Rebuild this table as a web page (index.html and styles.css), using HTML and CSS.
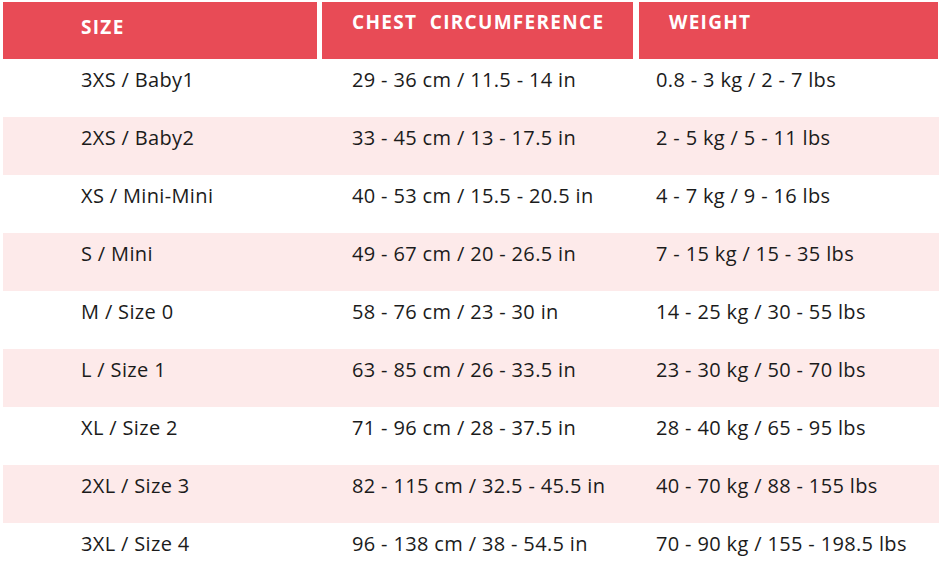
FILE: index.html
```html
<!DOCTYPE html>
<html lang="en">
<head>
<meta charset="utf-8">
<title>Size chart</title>
<link rel="stylesheet" href="styles.css">
</head>
<body>
<div class="chart">
  <div class="head">
    <div class="hcell hsize">SIZE</div>
    <div class="hcell hchest">CHEST&nbsp; CIRCUMFERENCE</div>
    <div class="hcell hweight">WEIGHT</div>
  </div>
  <div class="row"><div class="c1">3XS / Baby1</div><div class="c2">29 - 36 cm / 11.5 - 14 in</div><div class="c3">0.8 - 3 kg / 2 - 7 lbs</div></div>
  <div class="row alt"><div class="c1">2XS / Baby2</div><div class="c2">33 - 45 cm / 13 - 17.5 in</div><div class="c3">2 - 5 kg / 5 - 11 lbs</div></div>
  <div class="row"><div class="c1">XS / Mini-Mini</div><div class="c2">40 - 53 cm / 15.5 - 20.5 in</div><div class="c3">4 - 7 kg / 9 - 16 lbs</div></div>
  <div class="row alt"><div class="c1">S / Mini</div><div class="c2">49 - 67 cm / 20 - 26.5 in</div><div class="c3">7 - 15 kg / 15 - 35 lbs</div></div>
  <div class="row"><div class="c1">M / Size 0</div><div class="c2">58 - 76 cm / 23 - 30 in</div><div class="c3">14 - 25 kg / 30 - 55 lbs</div></div>
  <div class="row alt"><div class="c1">L / Size 1</div><div class="c2">63 - 85 cm / 26 - 33.5 in</div><div class="c3">23 - 30 kg / 50 - 70 lbs</div></div>
  <div class="row"><div class="c1">XL / Size 2</div><div class="c2">71 - 96 cm / 28 - 37.5 in</div><div class="c3">28 - 40 kg / 65 - 95 lbs</div></div>
  <div class="row alt"><div class="c1">2XL / Size 3</div><div class="c2">82 - 115 cm / 32.5 - 45.5 in</div><div class="c3">40 - 70 kg / 88 - 155 lbs</div></div>
  <div class="row"><div class="c1">3XL / Size 4</div><div class="c2">96 - 138 cm / 38 - 54.5 in</div><div class="c3">70 - 90 kg / 155 - 198.5 lbs</div></div>
</div>
</body>
</html>
```
FILE: styles.css
```css
html, body {
  margin: 0;
  background: #ffffff;
}
.chart {
  padding: 2px 1px 0 3px;
  font-family: "Open Sans", "Liberation Sans", sans-serif;
  color: #1b1b1b;
}
.head {
  display: grid;
  grid-template-columns: 314px 311px 300px;
  column-gap: 5px;
}
.head .hweight { margin-left: 1px; }
.hcell {
  height: 57px;
  background: #e84b56;
  color: #ffffff;
  font-weight: 700;
  font-size: 19px;
  letter-spacing: 1.3px;
  box-sizing: border-box;
}
.hsize { padding: 12px 0 0 78px; }
.hchest { padding: 7px 0 0 30px; }
.hweight { padding: 7px 0 0 30px; }
.row {
  display: grid;
  grid-template-columns: 319px 317px 300px;
  height: 58px;
  font-size: 20px;
  letter-spacing: 0.35px;
}
.row.alt { background: #fdeaea; }
.row > div { padding-top: 7px; }
.c1 { padding-left: 78px; }
.c2 { padding-left: 30px; }
.c3 { padding-left: 17px; }
```
